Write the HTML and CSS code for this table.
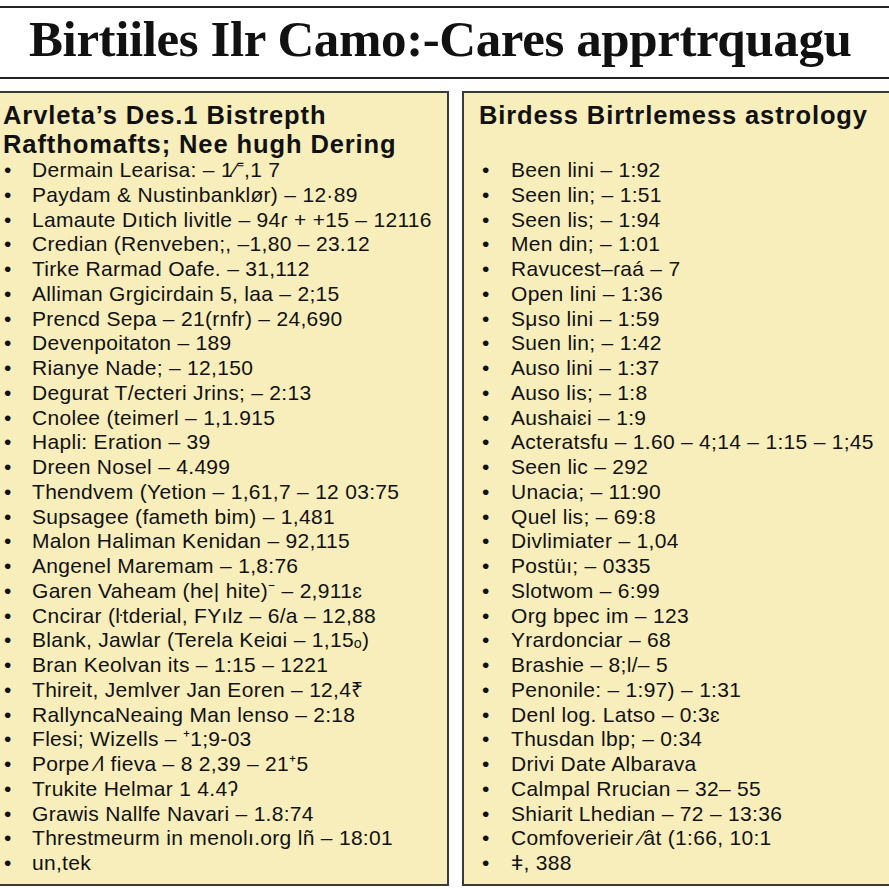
FILE: index.html
```html
<!DOCTYPE html>
<html lang="en">
<head>
<meta charset="utf-8">
<title>Birtiiles Ilr Camo:-Cares apprtrquagu</title>
<link rel="stylesheet" href="styles.css">
</head>
<body>
<header class="title-bar">
  <h1 class="title">Birtiiles Ilr Camo:-Cares apprtrquagu</h1>
</header>
<main class="panels">
  <section class="panel panel-left">
    <h2 class="panel-heading"><span class="heading-line">Arvleta’s Des.1 Bistrepth</span><span class="heading-line">Rafthomafts; Nee hugh Dering</span></h2>
    <ul class="items">
      <li>Dermain Learisa: – 1⁄⁼,1 7</li>
      <li>Paydam &amp; Nustinbanklør) – 12·89</li>
      <li>Lamaute Dıtich livitle – 94ɾ + +15 – 12116</li>
      <li>Credian (Renveben;, –1,80 – 23.12</li>
      <li>Tirke Rarmad Oafe. – 31,112</li>
      <li>Alliman Grgicirdain 5, laa – 2;15</li>
      <li>Prencd Sepa – 21(rnfr) – 24,690</li>
      <li>Devenpoitaton – 189</li>
      <li>Rianye Nade; – 12,150</li>
      <li>Degurat T/ecteri Jrins; – 2:13</li>
      <li>Cnolee (teimerl – 1,1.915</li>
      <li>Hapli: Eration – 39</li>
      <li>Dreen Nosel – 4.499</li>
      <li>Thendvem (Yetion – 1,61,7 – 12 03:75</li>
      <li>Supsagee (fameth bim) – 1,481</li>
      <li>Malon Haliman Kenidan – 92,115</li>
      <li>Angenel Maremam – 1,8:76</li>
      <li>Garen Vaheam (he| hite)⁻ – 2,911ɛ</li>
      <li>Cncirar (ŀtderial, FYılz – 6/a – 12,88</li>
      <li>Blank, Jawlar (Terela Keiɑi – 1,15ₒ)</li>
      <li>Bran Keolvan its – 1:15 – 1221</li>
      <li>Thireit, Jemlver Jan Eoren – 12,4₹</li>
      <li>RallyncaNeaing Man lenso – 2:18</li>
      <li>Flesi; Wizells – ⁺1;9-03</li>
      <li>Porpe ⁄l fieva – 8 2,39 – 21⁺5</li>
      <li>Trukite Helmar 1 4.4ʔ</li>
      <li>Grawis Nallfe Navari – 1.8:74</li>
      <li>Threstmeurm in menolı.org lñ – 18:01</li>
      <li>un,tek</li>
    </ul>
  </section>
  <section class="panel panel-right">
    <h2 class="panel-heading"><span class="heading-line">Birdess Birtrlemess astrology</span></h2>
    <ul class="items">
      <li>Been lini – 1:92</li>
      <li>Seen lin; – 1:51</li>
      <li>Seen lis; – 1:94</li>
      <li>Men din; – 1:01</li>
      <li>Ravucest–ɾaá – 7</li>
      <li>Open lini – 1:36</li>
      <li>Sμso lini – 1:59</li>
      <li>Suen lin; – 1:42</li>
      <li>Auso lini – 1:37</li>
      <li>Auso lis; – 1:8</li>
      <li>Aushaiɛi – 1:9</li>
      <li>Acteratsfu – 1.60 – 4;14 – 1:15 – 1;45</li>
      <li>Seen lic – 292</li>
      <li>Unacia; – 11:90</li>
      <li>Quel lis; – 69:8</li>
      <li>Divlimiater – 1,04</li>
      <li>Postüı; – 0335</li>
      <li>Slotwom – 6:99</li>
      <li>Org bpec im – 123</li>
      <li>Yrardonciar – 68</li>
      <li>Brashie – 8;l/– 5</li>
      <li>Penonile: – 1:97) – 1:31</li>
      <li>Denl log. Latso – 0:3ɛ</li>
      <li>Thusdan lbp; – 0:34</li>
      <li>Drivi Date Albarava</li>
      <li>Calmpal Rrucian – 32– 55</li>
      <li>Shiarit Lhedian – 72 – 13:36</li>
      <li>Comfoverieir ⁄ât (1:66, 10:1</li>
      <li>ǂ, 388</li>
    </ul>
  </section>
</main>
</body>
</html>
```

FILE: styles.css
```css
* {
  box-sizing: border-box;
}

html, body {
  margin: 0;
  padding: 0;
  background: #ffffff;
}

body {
  color: #111111;
  font-family: "Liberation Sans", Arial, sans-serif;
  overflow: hidden;
}

.title-bar {
  margin-top: 6px;
  border-top: 2px solid #222222;
  border-bottom: 2px solid #222222;
  padding: 3px 0 10px 29px;
}

.title {
  margin: 0;
  font-family: "Liberation Serif", "Times New Roman", serif;
  font-weight: bold;
  font-size: 51px;
  line-height: 56px;
  letter-spacing: -0.4px;
  color: #111111;
  white-space: nowrap;
}

.panels {
  display: grid;
  grid-template-columns: 449px 1fr;
  column-gap: 13px;
  margin-top: 12px;
}

.panel {
  background: #f8eebb;
  border: 2px solid #3a3a36;
  height: 795px;
  padding-top: 8px;
}

.panel-left {
  border-left: 0;
  padding-left: 3px;
}

.panel-right {
  border-right: 0;
  padding-left: 15px;
}

.panel-heading {
  margin: 0;
  font-size: 25.5px;
  font-weight: bold;
  line-height: 28.5px;
  letter-spacing: 0.9px;
  min-height: 57px;
  color: #111111;
}

.heading-line {
  display: block;
  white-space: nowrap;
}

.items {
  list-style: none;
  margin: 0;
  padding: 0;
  font-size: 21px;
  line-height: 24.75px;
  letter-spacing: 0.3px;
  white-space: nowrap;
}

.items li {
  display: grid;
  grid-template-columns: 29px 1fr;
}

.items li::before {
  content: "•";
  padding-left: 1px;
}

.panel-right .items {
  padding-left: 2px;
}

.panel-right .items li {
  grid-template-columns: 30px 1fr;
}
```
